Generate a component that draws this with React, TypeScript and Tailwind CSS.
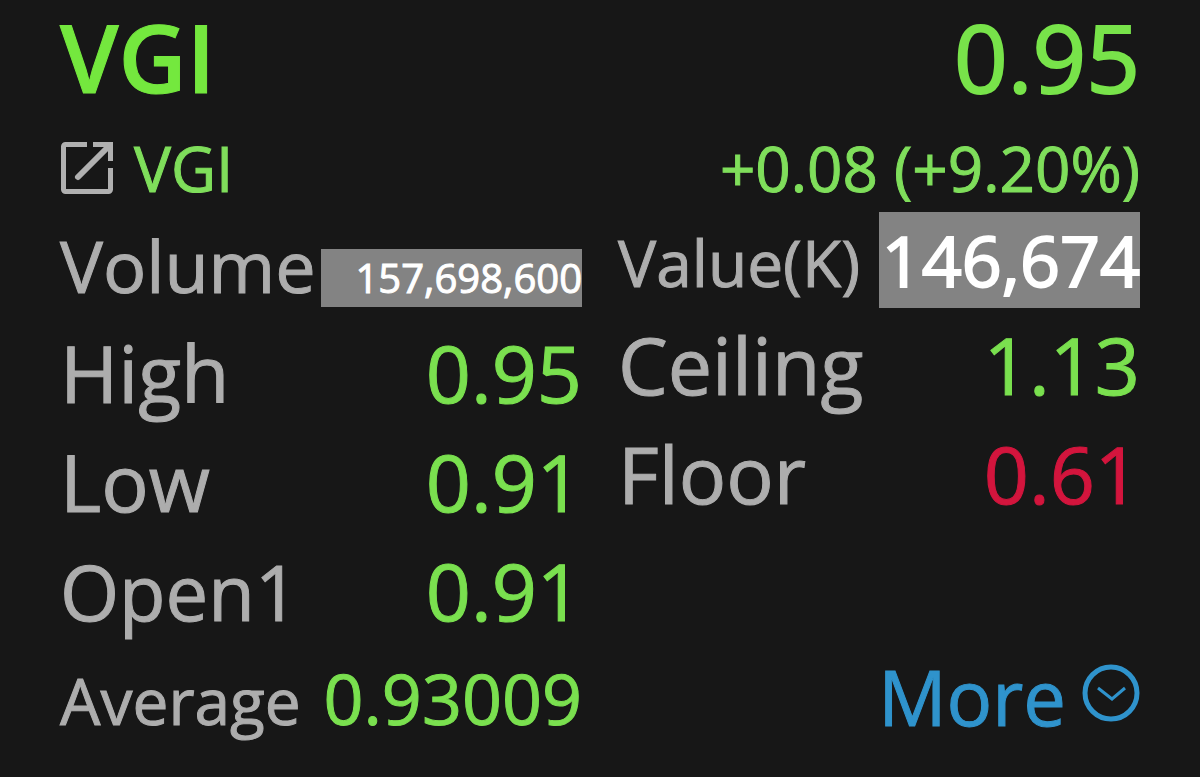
import { useState } from 'react'

type QuoteRowProps = {
  label: string
  value: string
  labelClass?: string
  valueClass?: string
}

const grayClass = 'text-[79px] text-[#adadad]'
const greenClass = 'text-[79px] text-[#7ae04f]'
const redClass = 'text-[79px] text-[#d3153d]'

function QuoteRow({ label, value, labelClass = grayClass, valueClass = greenClass }: QuoteRowProps) {
  return (
    <div className="flex items-baseline justify-between leading-[109px]">
      <dt className={labelClass}>{label}</dt>
      <dd className={valueClass}>{value}</dd>
    </div>
  )
}

function OpenIcon() {
  return (
    <svg viewBox="0 0 54 54" fill="none" stroke="#b0b0b0" strokeWidth="5" className="size-[54px]" aria-hidden="true">
      <path d="M27 3.5H5.5a2 2 0 0 0-2 2v43a2 2 0 0 0 2 2h43a2 2 0 0 0 2-2V27" />
      <path d="M33 3.5h17.5V20" />
      <path d="M18 36 49 5" strokeWidth="6" strokeLinecap="round" />
    </svg>
  )
}

function MoreIcon({ open }: { open: boolean }) {
  return (
    <svg viewBox="0 0 58 58" fill="none" stroke="currentColor" className="mb-2 size-[58px]" aria-hidden="true">
      <circle cx="29" cy="29" r="26" strokeWidth="5" />
      <path d={open ? 'm16 34 14-11 13 11' : 'm16 24 14 11 13-11'} strokeWidth="3" />
    </svg>
  )
}

export default function App() {
  const [open, setOpen] = useState(false)

  return (
    <main className="min-h-screen w-full bg-[#171717] px-[60px] pt-[3px] font-['Open_Sans',sans-serif] whitespace-nowrap [-webkit-text-stroke:1px]">
      <header>
        <div className="flex items-baseline justify-between leading-[108px]">
          <h1 className="text-[94px] font-semibold text-[#74e83e]">VGI</h1>
          <p className="text-[94px] text-[#78e34a] [-webkit-text-stroke:2px]">0.95</p>
        </div>
        <div className="mt-[13px] flex items-center justify-between text-[62px] leading-[88px] text-[#7fde5b]">
          <a href="#vgi" className="flex items-center gap-5">
            <OpenIcon />
            VGI
          </a>
          <p>+0.08 (+9.20%)</p>
        </div>
      </header>

      <div className="grid grid-cols-2 gap-9">
        <dl>
          <div className="flex items-baseline justify-between leading-[106px]">
            <dt className="text-[72px] text-[#adadad]">Volume</dt>
            <dd className="w-1/2 bg-[#838383] text-right text-[40px] leading-[58px] text-white">157,698,600</dd>
          </div>
          <QuoteRow label="High" value="0.95" />
          <QuoteRow label="Low" value="0.91" />
          <QuoteRow label="Open1" value="0.91" labelClass="text-[76px] text-[#adadad]" />
          <div className="flex items-baseline justify-between leading-[104px]">
            <dt className="text-[64px] text-[#adadad]">Average</dt>
            <dd className="text-[70px] text-[#7ae04f]">0.93009</dd>
          </div>
        </dl>

        <div className="flex flex-col">
          <dl>
            <div className="flex items-baseline justify-between pb-[2px]">
              <dt className="text-[64px] leading-[80px] text-[#adadad]">Value(K)</dt>
              <dd className="w-1/2 bg-[#838383] text-right text-[70px] leading-[96px] text-white [-webkit-text-stroke:2px]">
                146,674
              </dd>
            </div>
            <QuoteRow label="Ceiling" value="1.13" />
            <QuoteRow label="Floor" value="0.61" valueClass={redClass} />
          </dl>
          <button
            type="button"
            aria-expanded={open}
            onClick={() => setOpen(!open)}
            className="mt-auto mb-[2px] flex cursor-pointer items-center gap-4 self-end text-[76px] leading-[109px] text-[#2f93cc]"
          >
            More
            <MoreIcon open={open} />
          </button>
        </div>
      </div>
    </main>
  )
}
